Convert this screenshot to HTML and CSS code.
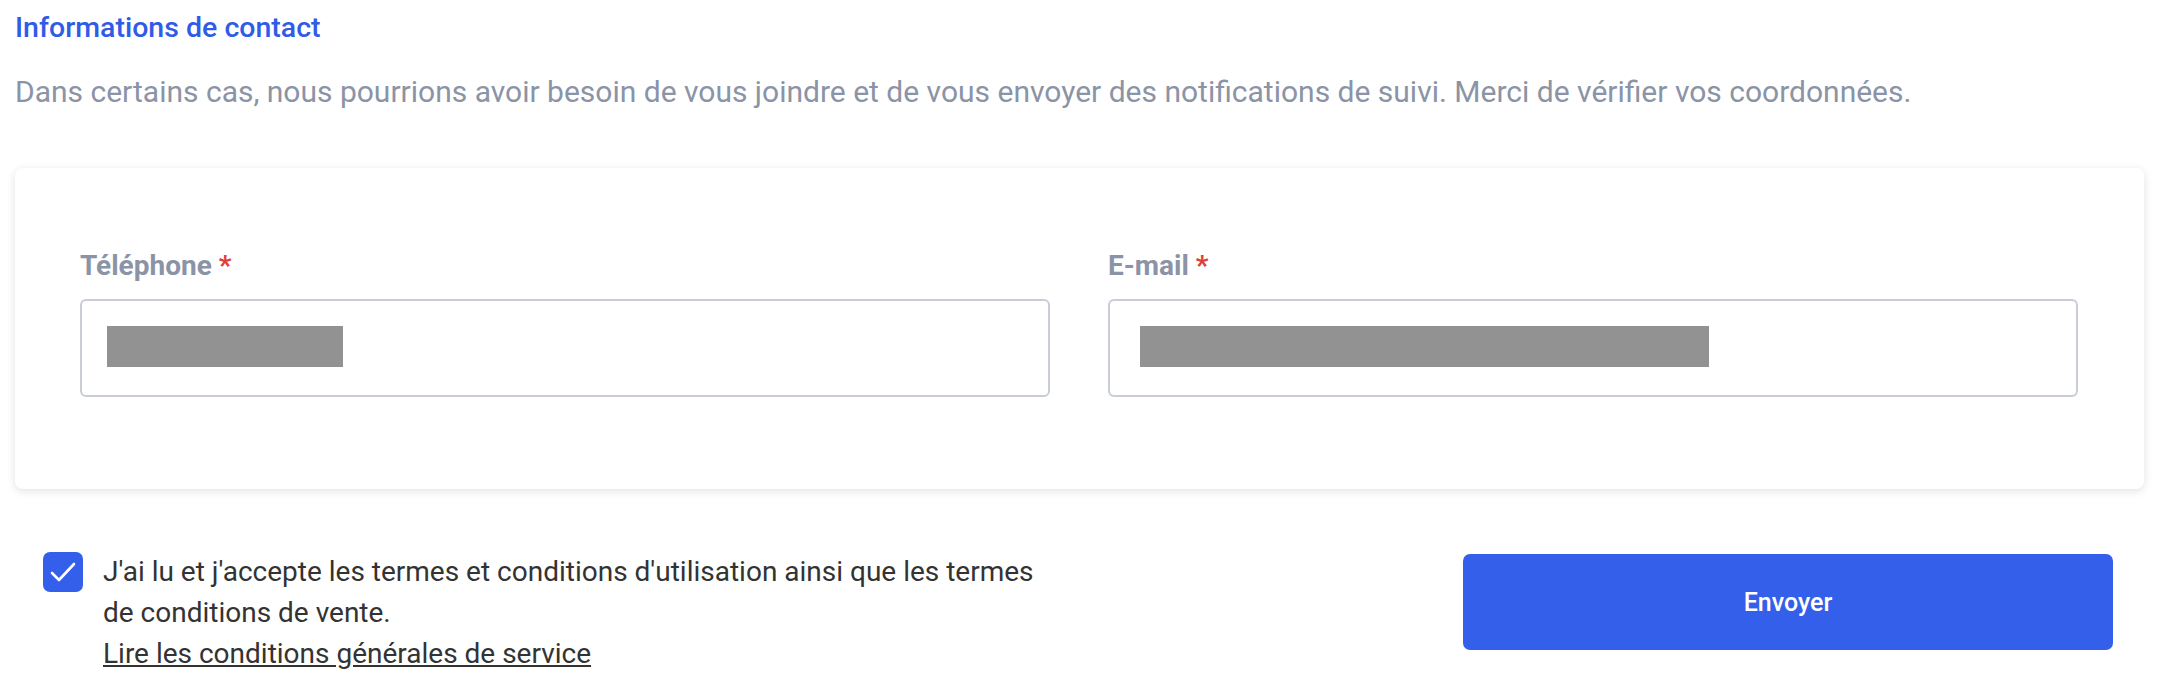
FILE: index.html
```html
<!DOCTYPE html>
<html lang="fr">
<head>
  <meta charset="UTF-8">
  <title>Informations de contact</title>
  <link rel="stylesheet" href="styles.css">
</head>
<body>
  <div class="page">
    <h2 class="title">Informations de contact</h2>
    <p class="intro">Dans certains cas, nous pourrions avoir besoin de vous joindre et de vous envoyer des notifications de suivi. Merci de vérifier vos coordonnées.</p>

    <div class="card">
      <div class="field">
        <label class="label">Téléphone <span class="req">*</span></label>
        <div class="input"><span class="mask mask-phone"></span></div>
      </div>
      <div class="field">
        <label class="label">E-mail <span class="req">*</span></label>
        <div class="input"><span class="mask mask-mail"></span></div>
      </div>
    </div>

    <div class="footer">
      <div class="terms">
        <span class="check">
          <svg width="40" height="40" viewBox="0 0 40 40"><path d="M9 21l7 7L31 12" fill="none" stroke="#fff" stroke-width="2.6" stroke-linecap="round" stroke-linejoin="round"/></svg>
        </span>
        <div class="terms-text">
          J'ai lu et j'accepte les termes et conditions d'utilisation ainsi que les termes<br>
          de conditions de vente.<br>
          <a href="#" class="terms-link">Lire les conditions générales de service</a>
        </div>
      </div>
      <button class="send">Envoyer</button>
    </div>
  </div>
</body>
</html>
```

FILE: styles.css
```css
body {
  margin: 0;
  font-family: Roboto, "Liberation Sans", sans-serif;
  background: #fff;
}
.page {
  padding: 8px 16px 0 15px;
}
.title {
  margin: 0;
  font-size: 28.5px;
  font-weight: 500;
  line-height: 40px;
  color: #2f5be7;
}
.intro {
  margin: 22px 0 0;
  font-size: 30px;
  line-height: 44px;
  color: #8b93a6;
}
.card {
  margin-top: 54px;
  display: flex;
  gap: 58px;
  padding: 82px 66px 92px 65px;
  border-radius: 8px;
  background: #fff;
  box-shadow: 0 2px 8px rgba(40, 50, 80, 0.14);
}
.field {
  flex: 1;
}
.label {
  display: block;
  font-size: 28px;
  font-weight: 700;
  line-height: 32px;
  color: #8b93a6;
  margin-bottom: 17px;
}
.req {
  color: #e0403a;
}
.input {
  box-sizing: border-box;
  height: 98px;
  border: 2px solid #c9ced6;
  border-radius: 6px;
  display: flex;
  align-items: flex-start;
  padding: 25px 0 0 25px;
}
.mask {
  display: block;
  height: 41px;
  background: #929292;
}
.mask-phone {
  width: 236px;
}
.mask-mail {
  width: 569px;
  margin-left: 5px;
}
.footer {
  display: flex;
  justify-content: space-between;
  align-items: flex-start;
  margin-top: 63px;
  padding: 0 31px 0 28px;
}
.terms {
  display: flex;
  gap: 20px;
}
.check {
  flex: none;
  width: 40px;
  height: 40px;
  border-radius: 7px;
  background: #335fea;
}
.check svg {
  display: block;
}
.terms-text {
  font-size: 28px;
  line-height: 41px;
  color: #333;
  margin-top: -1px;
}
.terms-link {
  color: #333;
}
.send {
  width: 650px;
  height: 96px;
  margin-top: 2px;
  border: none;
  border-radius: 7px;
  background: #335fea;
  color: #fff;
  font-family: Roboto, "Liberation Sans", sans-serif;
  font-size: 25px;
  font-weight: 500;
}
```
